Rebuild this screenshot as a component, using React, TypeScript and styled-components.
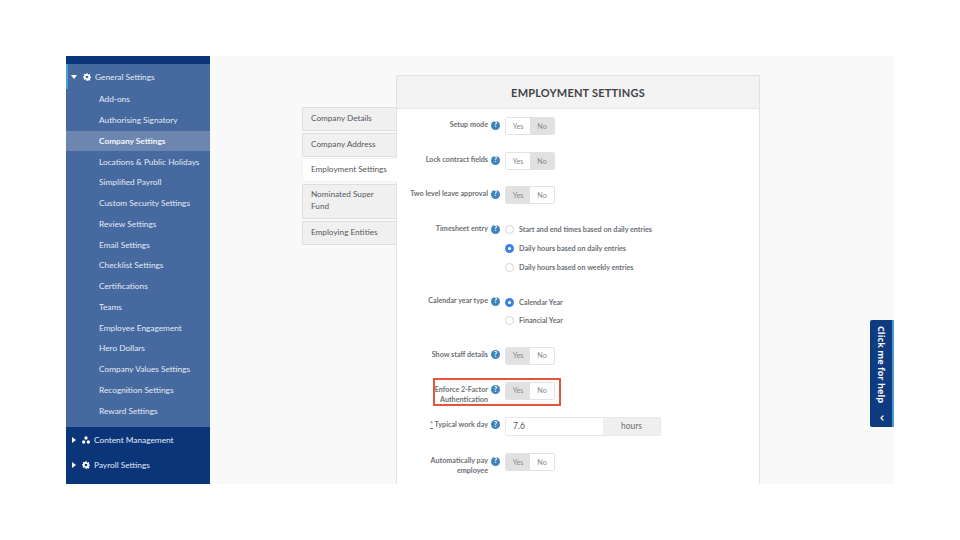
import { PropsWithChildren, ReactNode } from "react";
import styled, { createGlobalStyle } from "styled-components";
import { ChevronLeft } from "lucide-react";

const Global = createGlobalStyle`
  html, body {
    margin: 0;
    padding: 0;
    background: #fff;
    font-family: "Lato", "Liberation Sans", sans-serif;
  }
  * { box-sizing: border-box; }
`;

const Page = styled.div`
  width: 960px;
  height: 540px;
  padding: 56px 66px;
  overflow: hidden;
`;

const Frame = styled.div`
  position: relative;
  display: flex;
  width: 828px;
  height: 428px;
  overflow: hidden;
  background: #f9f9f9;
`;

const Sidebar = styled.nav`
  display: flex;
  flex-direction: column;
  flex: 0 0 144px;
  background: #0b3579;
  padding-top: 8px;
  font-size: 8.3px;
  color: #e3e9f3;
`;

const Group = styled.div`
  background: #46699f;
  height: 363px;
`;

const GroupHead = styled.div<{ $closed?: boolean }>`
  display: flex;
  align-items: center;
  height: ${({ $closed }) => ($closed ? "25.5px" : "25px")};
  padding-left: ${({ $closed }) => ($closed ? "6px" : "3px")};
  border-left: ${({ $closed }) => ($closed ? "none" : "2px solid #4f9bd6")};
`;

const Caret = styled.span<{ $open?: boolean }>`
  width: 0;
  height: 0;
  margin-right: 6px;
  ${({ $open }) =>
    $open
      ? `border-left: 3px solid transparent;
         border-right: 3px solid transparent;
         border-top: 4px solid #fff;`
      : `border-top: 3px solid transparent;
         border-bottom: 3px solid transparent;
         border-left: 4px solid #fff;`}
`;

const HeadIcon = styled.svg`
  width: 8px;
  height: 8px;
  margin-right: 4px;
  fill: #fff;
`;

const SubItem = styled.div<{ $active?: boolean }>`
  display: flex;
  align-items: center;
  height: 20.75px;
  padding-left: 33px;
  background: ${({ $active }) => ($active ? "#6c86b0" : "transparent")};
  font-weight: ${({ $active }) => ($active ? 700 : 400)};
  color: ${({ $active }) => ($active ? "#f4f6fa" : "#e3e9f3")};
  white-space: nowrap;
`;

const Main = styled.main`
  display: flex;
  align-items: flex-start;
  flex: 1;
  padding: 19px 0 0 92px;
`;

const Tabs = styled.div`
  position: relative;
  z-index: 1;
  display: flex;
  flex-direction: column;
  gap: 1.5px;
  width: 95px;
  margin: 32px -1px 0 0;
`;

const Tab = styled.div<{ $active?: boolean; $tall?: boolean }>`
  display: flex;
  align-items: center;
  min-height: ${({ $tall }) => ($tall ? "35.5px" : "24px")};
  padding: 0 9px 2px 8px;
  padding-right: ${({ $active }) => ($active ? "2px" : "9px")};
  font-size: 8.2px;
  line-height: 12px;
  color: #55585c;
  white-space: ${({ $tall }) => ($tall ? "normal" : "nowrap")};
  background: ${({ $active }) => ($active ? "#fff" : "#f0f0f0")};
  border: 1px solid ${({ $active }) => ($active ? "#f2f2f2" : "#dedede")};
  border-right: ${({ $active }) => ($active ? "none" : "1px solid #e2e2e2")};
  border-radius: 2px 0 0 2px;
`;

const Panel = styled.section`
  width: 364px;
  height: 420px;
  background: #fff;
  border: 1px solid #e2e2e2;
  border-bottom: none;
`;

const PanelTitle = styled.h1`
  display: flex;
  align-items: center;
  justify-content: center;
  margin: 0;
  height: 33px;
  font-size: 11px;
  font-weight: 700;
  letter-spacing: 0.2px;
  color: #3f4246;
  background: #f3f3f3;
  border-bottom: 1px solid #e6e6e6;
`;

const Form = styled.div`
  display: flex;
  flex-direction: column;
  padding-top: 8px;
`;

const Row = styled.div<{ $gap: number }>`
  display: flex;
  align-items: flex-start;
  margin-bottom: ${({ $gap }) => $gap}px;
`;

const LabelCell = styled.div`
  display: flex;
  justify-content: flex-end;
  align-items: flex-start;
  width: 103px;
  padding-left: 10px;
`;

const Label = styled.label`
  flex: 1;
  text-align: right;
  font-size: 7.2px;
  line-height: 10px;
  font-weight: 700;
  color: #6d7074;
  padding-top: 3px;
`;

const Help = styled.span`
  display: flex;
  align-items: center;
  justify-content: center;
  flex: 0 0 9px;
  width: 9px;
  height: 9px;
  margin: 3.5px 0 0 3px;
  border-radius: 50%;
  background: #3f84bd;
  color: #fff;
  font-size: 6.5px;
  font-weight: 900;
  line-height: 1;
`;

const Toggle = styled.div`
  display: flex;
  width: 50px;
  height: 18px;
  margin-left: 5px;
  border: 1px solid #e2e2e2;
  border-radius: 2px;
  overflow: hidden;
`;

const ToggleOption = styled.div<{ $on?: boolean }>`
  display: flex;
  align-items: center;
  justify-content: center;
  flex: 1;
  font-size: 7.2px;
  color: #85888c;
  background: ${({ $on }) => ($on ? "#e1e1e1" : "#fff")};
`;

const RadioList = styled.div`
  display: flex;
  flex-direction: column;
  gap: 9.2px;
  margin: 4px 0 0 5px;
`;

const RadioRow = styled.div`
  display: flex;
  align-items: center;
  height: 9.5px;
  gap: 5px;
  font-size: 7.2px;
  font-weight: 700;
  color: #6d7074;
  white-space: nowrap;
`;

const RadioDot = styled.span<{ $on?: boolean }>`
  width: 9px;
  height: 9px;
  flex: none;
  border-radius: 50%;
  background: #fff;
  border: ${({ $on }) => ($on ? "3px solid #3e82e0" : "1px solid #d5d5d5")};
`;

const Highlight = styled.div`
  position: absolute;
  left: 367px;
  top: 322px;
  width: 128px;
  height: 28px;
  border: 2px solid #e5543d;
  pointer-events: none;
`;

const HoursGroup = styled.div`
  display: flex;
  height: 19px;
  width: 156px;
  margin-left: 5px;
  border: 1px solid #e8e8e8;
  border-radius: 2px;
  overflow: hidden;
`;

const HoursInput = styled.div`
  flex: 1;
  display: flex;
  align-items: center;
  padding-left: 7px;
  font-size: 8.5px;
  color: #55585c;
  background: #fff;
`;

const HoursUnit = styled.div`
  display: flex;
  align-items: center;
  justify-content: center;
  flex: 0 0 57px;
  padding-bottom: 1px;
  font-size: 8.5px;
  color: #6d7074;
  background: #efefef;
`;

const Required = styled.span`
  text-decoration: underline;
  font-weight: 400;
`;

const HelpTab = styled.div`
  position: absolute;
  left: 804px;
  top: 264px;
  width: 24px;
  height: 107px;
  display: flex;
  flex-direction: column;
  align-items: center;
  padding-top: 6px;
  background: #0f3c80;
  border-right: 2px solid #4f9bd6;
  border-radius: 2px 0 0 2px;
  color: #f4f6fa;
`;

const HelpText = styled.span`
  writing-mode: vertical-rl;
  font-family: "Open Sans", "Liberation Sans", sans-serif;
  font-size: 9.2px;
  font-weight: 700;
  white-space: nowrap;
`;

const HelpChevron = styled(ChevronLeft)`
  position: absolute;
  bottom: 5.5px;
  left: 8px;
  width: 8px;
  height: 8px;
  stroke-width: 4;
`;

const SUB_ITEMS = [
  "Add-ons",
  "Authorising Signatory",
  "Company Settings",
  "Locations & Public Holidays",
  "Simplified Payroll",
  "Custom Security Settings",
  "Review Settings",
  "Email Settings",
  "Checklist Settings",
  "Certifications",
  "Teams",
  "Employee Engagement",
  "Hero Dollars",
  "Company Values Settings",
  "Recognition Settings",
  "Reward Settings",
];

const Gear = () => (
  <HeadIcon viewBox="0 0 24 24">
    <path
      d="M10 1h4l.6 3.200 2 .8 2.700-1.800 2.800 2.800-1.800 2.700.8 2 3.200.6v4l-3.200.6-.8 2 1.800 2.700-2.800 2.800-2.700-1.800-2 .8L14 23h-4l-.6-3.200-2-.8-2.700 1.800-2.800-2.800 1.800-2.700-.8-2L0 14v-4l3.200-.6.8-2-1.800-2.700L5 1.900l2.700 1.800 2-.8zM12 8a4 4 0 1 0 0 8 4 4 0 0 0 0-8z"
      fillRule="evenodd"
    />
  </HeadIcon>
);

const Sitemap = () => (
  <HeadIcon viewBox="0 0 24 24">
    <circle cx="12" cy="6" r="5" />
    <circle cx="5" cy="18" r="5" />
    <circle cx="19" cy="18" r="5" />
  </HeadIcon>
);

function Field({
  label,
  gap,
  children,
}: PropsWithChildren<{ label: ReactNode; gap: number }>) {
  return (
    <Row $gap={gap}>
      <LabelCell>
        <Label>{label}</Label>
        <Help>?</Help>
      </LabelCell>
      {children}
    </Row>
  );
}

function YesNo({ value }: { value: "yes" | "no" }) {
  return (
    <Toggle>
      <ToggleOption $on={value === "yes"}>Yes</ToggleOption>
      <ToggleOption $on={value === "no"}>No</ToggleOption>
    </Toggle>
  );
}

export default function App() {
  return (
    <Page>
      <Global />
      <Frame>
        <Sidebar>
          <Group>
            <GroupHead>
              <Caret $open />
              <Gear />
              General Settings
            </GroupHead>
            {SUB_ITEMS.map((item) => (
              <SubItem key={item} $active={item === "Company Settings"}>
                {item}
              </SubItem>
            ))}
          </Group>
          <GroupHead $closed>
            <Caret />
            <Sitemap />
            Content Management
          </GroupHead>
          <GroupHead $closed>
            <Caret />
            <Gear />
            Payroll Settings
          </GroupHead>
        </Sidebar>
        <Main>
          <Tabs>
            <Tab>Company Details</Tab>
            <Tab>Company Address</Tab>
            <Tab $active>Employment Settings</Tab>
            <Tab $tall>Nominated Super Fund</Tab>
            <Tab>Employing Entities</Tab>
          </Tabs>
          <Panel>
            <PanelTitle>EMPLOYMENT SETTINGS</PanelTitle>
            <Form>
              <Field label="Setup mode" gap={17}>
                <YesNo value="no" />
              </Field>
              <Field label="Lock contract fields" gap={16}>
                <YesNo value="no" />
              </Field>
              <Field label="Two level leave approval" gap={17}>
                <YesNo value="yes" />
              </Field>
              <Field label="Timesheet entry" gap={21.4}>
                <RadioList>
                  <RadioRow>
                    <RadioDot />
                    Start and end times based on daily entries
                  </RadioRow>
                  <RadioRow>
                    <RadioDot $on />
                    Daily hours based on daily entries
                  </RadioRow>
                  <RadioRow>
                    <RadioDot />
                    Daily hours based on weekly entries
                  </RadioRow>
                </RadioList>
              </Field>
              <Field label="Calendar year type" gap={21.5}>
                <RadioList>
                  <RadioRow>
                    <RadioDot $on />
                    Calendar Year
                  </RadioRow>
                  <RadioRow>
                    <RadioDot />
                    Financial Year
                  </RadioRow>
                </RadioList>
              </Field>
              <Field label="Show staff details" gap={17}>
                <YesNo value="yes" />
              </Field>
              <Field label="Enforce 2-Factor Authentication" gap={12}>
                <YesNo value="yes" />
              </Field>
              <Field
                label={
                  <>
                    <Required>*</Required> Typical work day
                  </>
                }
                gap={17.5}
              >
                <HoursGroup>
                  <HoursInput>7.6</HoursInput>
                  <HoursUnit>hours</HoursUnit>
                </HoursGroup>
              </Field>
              <Field label="Automatically pay employee" gap={0}>
                <YesNo value="yes" />
              </Field>
            </Form>
          </Panel>
        </Main>
        <Highlight />
        <HelpTab>
          <HelpText>Click me for help</HelpText>
          <HelpChevron />
        </HelpTab>
      </Frame>
    </Page>
  );
}
